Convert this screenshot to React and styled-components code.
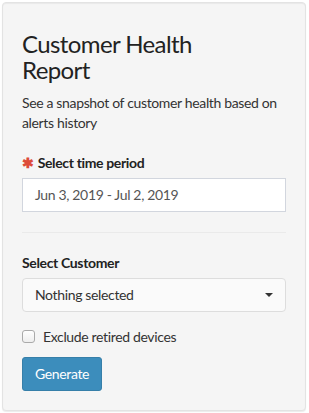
import React from "react";
import styled, { createGlobalStyle } from "styled-components";

const Global = createGlobalStyle`
  html, body { margin: 0; padding: 0; background: #fff; }
  body { font-family: Lato, "Open Sans", sans-serif; font-size: 14px; line-height: 1.42857; color: #333; letter-spacing: -0.35px; }
  * { box-sizing: border-box; }
`;

const Panel = styled.div`
  margin: 2px 3px 3px 2px;
  padding: 19px;
  background: #f5f5f5;
  border: 1px solid #e3e3e3;
  border-radius: 4px;
  box-shadow: inset 0 1px 1px rgba(0,0,0,0.05), 0 1px 1px rgba(0,0,0,0.08);
`;

const Title = styled.h1`
  margin: 9px 0 10px;
  max-width: 200px;
  font-size: 24px;
  font-weight: 400;
  line-height: 1.08;
  letter-spacing: -0.6px;
  color: #222;
`;

const Lead = styled.p`
  margin: 0 0 20px;
  color: #333;
`;

const Field = styled.div`
  margin-bottom: ${p => p.$mb ?? 15}px;
`;

const Label = styled.label`
  display: flex;
  align-items: center;
  gap: 4px;
  margin-bottom: 5px;
  font-weight: 700;
  color: #222;
`;

const Star = styled.span`
  color: #dd4b39;
  font-size: 14px;
  line-height: 1;
`;

const Input = styled.div`
  height: 34px;
  padding: 6px 12px;
  background: #fff;
  border: 1px solid #d2d6de;
  color: #555;
  display: flex;
  align-items: center;
`;

const Divider = styled.hr`
  margin: 20px 0;
  border: 0;
  border-top: 1px solid #eaeaea;
`;

const Select = styled.div`
  height: 34px;
  padding: 6px 12px;
  background: #fafafa;
  border: 1px solid #ddd;
  border-radius: 4px;
  color: #333;
  display: flex;
  align-items: center;
  justify-content: space-between;
`;

const Caret = styled.span`
  width: 0;
  height: 0;
  border-left: 4px solid transparent;
  border-right: 4px solid transparent;
  border-top: 4px solid #333;
`;

const CheckRow = styled.label`
  display: flex;
  align-items: center;
  gap: 8px;
  margin: 0 0 10px;
  color: #333;
`;

const Box = styled.span`
  width: 13px;
  height: 13px;
  border: 1px solid #aaa;
  border-radius: 3px;
  background: linear-gradient(#fff, #eee);
`;

const Button = styled.button`
  font-family: inherit;
  font-size: 14px;
  letter-spacing: inherit;
  line-height: 1.42857;
  padding: 6px 12px;
  height: 34px;
  color: #fff;
  background: #3c8dbc;
  border: 1px solid #367fa9;
  border-radius: 3px;
  cursor: pointer;
`;

export default function App() {
  return (
    <>
      <Global />
      <Panel>
        <Title>Customer Health Report</Title>
        <Lead>See a snapshot of customer health based on alerts history</Lead>
        <Field $mb={0}>
          <Label><Star>✱</Star>Select time period</Label>
          <Input>Jun 3, 2019 - Jul 2, 2019</Input>
        </Field>
        <Divider />
        <Field>
          <Label>Select Customer</Label>
          <Select>
            <span>Nothing selected</span>
            <Caret />
          </Select>
        </Field>
        <CheckRow><Box />Exclude retired devices</CheckRow>
        <Button>Generate</Button>
      </Panel>
    </>
  );
}
